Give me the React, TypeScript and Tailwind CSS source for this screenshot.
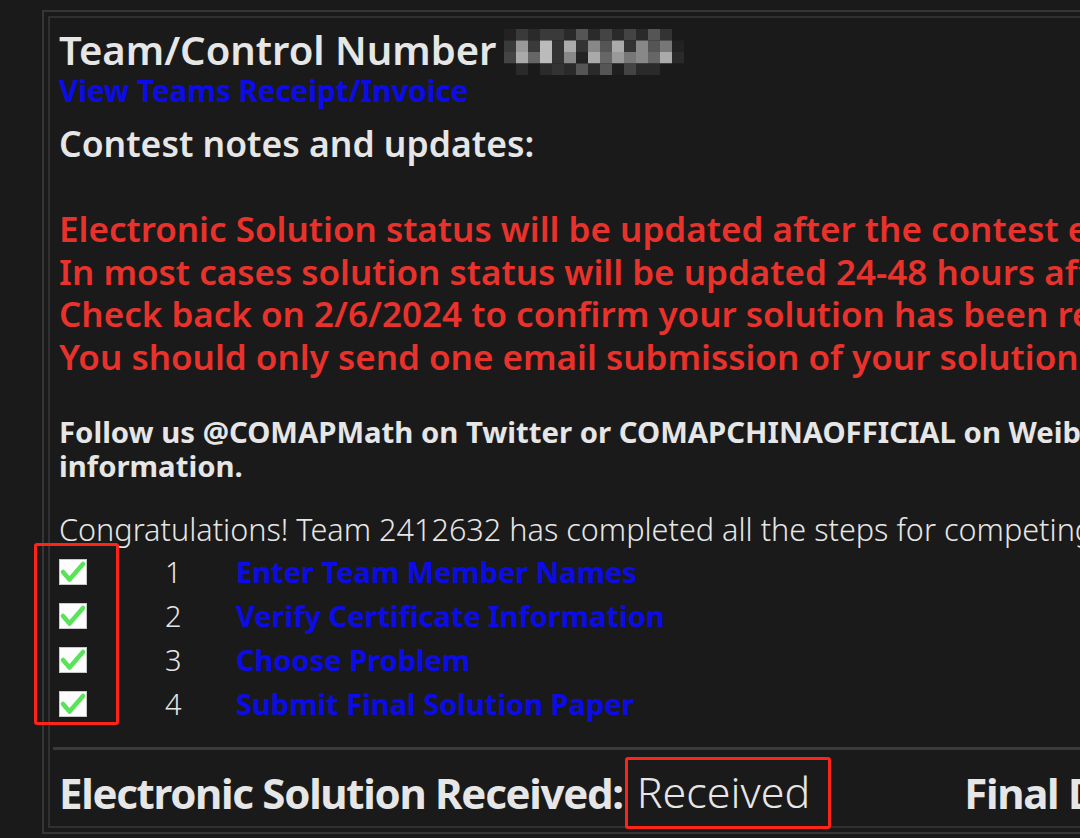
import React from 'react';

const mosaic = [
  ['#222', '#3a3a3a', '#2a2a2a', '#3a3a3a', '#3a3a3a', '#2a2a2a', '#555', '#2a2a2a', '#444', '#2a2a2a', '#444', '#2a2a2a', '#555', '#333', '#1a1a1a'],
  ['#3a3a3a', '#999', '#3a3a3a', '#bbb', '#333', '#aaa', '#333', '#888', '#555', '#aaa', '#333', '#888', '#555', '#777', '#222'],
  ['#444', '#aaa', '#666', '#bbb', '#333', '#888', '#222', '#aaa', '#666', '#999', '#777', '#888', '#666', '#aaa', '#2a2a2a'],
  ['#1a1a1a', '#2a2a2a', '#1a1a1a', '#2a2a2a', '#333', '#2a2a2a', '#555', '#2a2a2a', '#555', '#1f1f1f', '#444', '#2a2a2a', '#2a2a2a', '#1a1a1a', '#1a1a1a'],
];

const notes = [
  'Electronic Solution status will be updated after the contest ends.',
  'In most cases solution status will be updated 24-48 hours after the contest ends.',
  'Check back on 2/6/2024 to confirm your solution has been received.',
  'You should only send one email submission of your solution.',
];

const steps = [
  'Enter Team Member Names',
  'Verify Certificate Information',
  'Choose Problem',
  'Submit Final Solution Paper',
];

// pixelated (hidden) control number
const Blurred = () => (
  <svg width="180" height="46" viewBox="0 0 180 46" className="inline-block ml-[8px] mt-[4px]">
    {mosaic.map((row, r) =>
      row.map((c, i) => <rect key={`${r}-${i}`} x={i * 12} y={r * 11.5} width="12" height="11.5" fill={c} />)
    )}
  </svg>
);

const CheckBox = () => (
  <svg width="28" height="26" viewBox="0 0 28 26">
    <rect x="0.5" y="0.5" width="27" height="25" fill="#fdfdfd" stroke="#c8c8c8" />
    <path d="M4 13 L10.5 20.5 L24 5" fill="none" stroke="#58e358" strokeWidth="4.5" strokeLinecap="round" strokeLinejoin="round" />
  </svg>
);

export default function App() {
  return (
    <div
      className="relative w-[1080px] h-[838px] overflow-hidden bg-[#1a1a1a] text-[#e6e6e6]"
      style={{ fontFamily: '"Noto Sans", "Open Sans", sans-serif' }}
    >
      <div className="ml-[42px] mt-[10px] w-[1300px] border-2 border-[#363636] p-[4px]">
        <div className="border-2 border-[#303030] pl-[3px]">
          <div className="pl-[6px]">
            <div className="flex items-center h-[48px] mt-[8px] text-[40px] font-semibold whitespace-nowrap">
              Team/Control Number
              <Blurred />
            </div>
            <a className="block text-[29.5px] font-bold text-[#0c0ce8] leading-[32px] mt-[1px] whitespace-nowrap">
              View Teams Receipt/Invoice
            </a>
            <div className="text-[35.5px] font-semibold leading-[50px] mt-[11px] whitespace-nowrap">Contest notes and updates:</div>

            <div className="mt-[40px] text-[35px] font-semibold text-[#e8322b] leading-[42.5px] whitespace-nowrap">
              {notes.map(n => (
                <div key={n}>{n}</div>
              ))}
            </div>

            <div className="mt-[37px] text-[29.3px] font-bold leading-[34px] whitespace-nowrap">
              <div>Follow us @COMAPMath on Twitter or COMAPCHINAOFFICIAL on Weibo for the most current contest</div>
              <div>information.</div>
            </div>

            <div className="mt-[28px] text-[30.6px] font-light leading-[36px] whitespace-nowrap">
              Congratulations! Team 2412632 has completed all the steps for competing in the contest.
            </div>

            <div className="flex flex-col mt-[3px]">
              {steps.map((s, i) => (
                <div key={s} className="grid grid-cols-[28px_149px_1fr] items-center h-[44px]">
                  <CheckBox />
                  <span className="pl-[78px] text-[29px] font-light">{i + 1}</span>
                  <a className="text-[29px] font-bold text-[#0c0ce8] whitespace-nowrap">{s}</a>
                </div>
              ))}
            </div>
          </div>

          <div className="mt-[21px] h-[3px] bg-[#3a3a3a]" />

          <div className="pl-[6px] pt-[8px] flex items-center h-[76px] whitespace-nowrap">
            <span className="text-[42px] font-bold tracking-[-1.3px]">Electronic Solution Received:</span>
            <span className="ml-[14px] text-[43px] font-light">Received</span>
            <span className="ml-[154px] text-[42px] font-bold tracking-[-1.3px]">Final Decision:</span>
          </div>
        </div>
      </div>

      {/* annotation boxes */}
      <div className="absolute left-[34px] top-[543px] w-[85px] h-[182px] border-[3px] border-[#ff2418] rounded-[3px]" />
      <div className="absolute left-[625px] top-[757px] w-[206px] h-[72px] border-[3px] border-[#ff2418] rounded-[3px]" />
    </div>
  );
}
